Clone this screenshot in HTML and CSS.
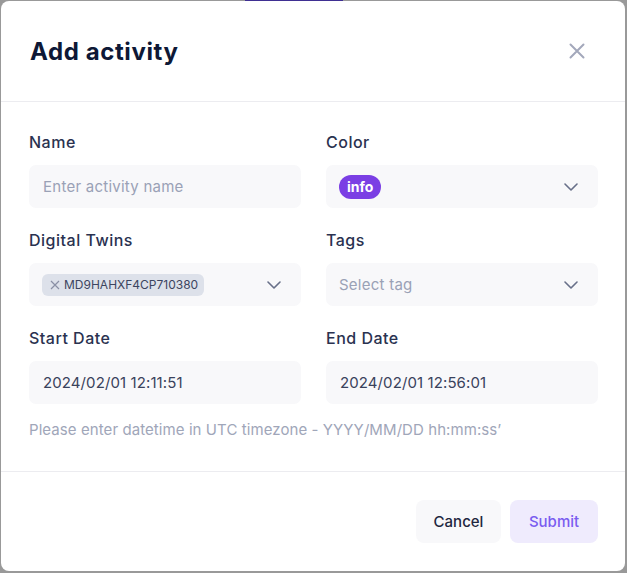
FILE: index.html
```html
<!DOCTYPE html>
<html lang="en">
<head>
<meta charset="utf-8">
<title>Add activity</title>
<link rel="stylesheet" href="styles.css">
</head>
<body>
<div class="backdrop-strip"><span class="strip-accent"></span></div>
<div class="dialog">
  <header class="dialog-header">
    <h1 class="dialog-title">Add activity</h1>
    <button class="close-btn" aria-label="Close">
      <svg width="16" height="16" viewBox="0 0 16 16"><path d="M1.5 1.5 L14.5 14.5 M14.5 1.5 L1.5 14.5" stroke="#a3a8bb" stroke-width="2" stroke-linecap="round" fill="none"/></svg>
    </button>
  </header>
  <div class="dialog-body">
    <div class="form-grid">
      <div class="field">
        <label class="field-label">Name</label>
        <div class="input"><span class="placeholder">Enter activity name</span></div>
      </div>
      <div class="field">
        <label class="field-label">Color</label>
        <div class="input select">
          <span class="badge">info</span>
          <svg class="chevron" width="14" height="8" viewBox="0 0 14 8"><path d="M1 1 L7 7 L13 1" stroke="#687089" stroke-width="1.6" fill="none" stroke-linecap="round" stroke-linejoin="round"/></svg>
        </div>
      </div>
      <div class="field">
        <label class="field-label">Digital Twins</label>
        <div class="input select">
          <span class="chip">
            <svg width="10" height="10" viewBox="0 0 10 10"><path d="M1 1 L9 9 M9 1 L1 9" stroke="#8a90a5" stroke-width="1.2" fill="none"/></svg>
            <span class="chip-text">MD9HAHXF4CP710380</span>
          </span>
          <svg class="chevron" width="14" height="8" viewBox="0 0 14 8"><path d="M1 1 L7 7 L13 1" stroke="#687089" stroke-width="1.6" fill="none" stroke-linecap="round" stroke-linejoin="round"/></svg>
        </div>
      </div>
      <div class="field">
        <label class="field-label">Tags</label>
        <div class="input select">
          <span class="placeholder">Select tag</span>
          <svg class="chevron" width="14" height="8" viewBox="0 0 14 8"><path d="M1 1 L7 7 L13 1" stroke="#687089" stroke-width="1.6" fill="none" stroke-linecap="round" stroke-linejoin="round"/></svg>
        </div>
      </div>
      <div class="field">
        <label class="field-label">Start Date</label>
        <div class="input"><span class="value">2024/02/01 12:11:51</span></div>
      </div>
      <div class="field">
        <label class="field-label">End Date</label>
        <div class="input"><span class="value">2024/02/01 12:56:01</span></div>
      </div>
    </div>
    <p class="help">Please enter datetime in UTC timezone - YYYY/MM/DD hh:mm:ss’</p>
  </div>
  <footer class="dialog-footer">
    <button class="btn btn-cancel">Cancel</button>
    <button class="btn btn-submit">Submit</button>
  </footer>
</div>
</body>
</html>
```
FILE: styles.css
```css
* { box-sizing: border-box; }
html, body { margin: 0; padding: 0; }
body {
  background: #999999;
  width: 627px;
  height: 573px;
  overflow: hidden;
  font-family: "Inter", "Liberation Sans", sans-serif;
  display: flex;
  flex-direction: column;
  padding: 0 2px 2px 1px;
}
.backdrop-strip { height: 1px; flex: none; display: flex; }
.strip-accent { width: 98px; height: 1px; margin-left: 244px; background: #3f2f92; }
.dialog {
  flex: 1;
  background: #ffffff;
  border-radius: 8px;
  display: flex;
  flex-direction: column;
}
.dialog-header {
  height: 101px;
  border-bottom: 1px solid #ececf0;
  display: flex;
  align-items: center;
  justify-content: space-between;
  padding: 0 40px 0 29px;
}
.dialog-title {
  margin: 0;
  font-size: 24px;
  font-weight: 700;
  color: #0e1836;
  letter-spacing: 0.6px;
}
.close-btn {
  background: none;
  border: 0;
  padding: 0;
  width: 16px;
  height: 16px;
  display: flex;
}
.dialog-body {
  padding: 27px 27px 31px 28px;
  border-bottom: 1px solid #ececf0;
}
.form-grid {
  display: grid;
  grid-template-columns: 272px 272px;
  column-gap: 25px;
  row-gap: 19px;
}
.field { display: flex; flex-direction: column; }
.field-label {
  font-size: 16px;
  line-height: 26px;
  font-weight: 500;
  color: #2a3250;
  letter-spacing: 0.5px;
  margin-bottom: 10px;
}
.input {
  height: 43px;
  background: #f8f8fa;
  border-radius: 7px;
  display: flex;
  align-items: center;
  padding: 0 14px;
  font-size: 15px;
}
.select { justify-content: space-between; padding-right: 20px; padding-left: 13px; }
.placeholder { color: #9aa1b6; letter-spacing: 0.25px; }
.value {
  color: #3a425c;
  letter-spacing: 0.1px;
}
.badge {
  background: #7b3fe4;
  color: #ffffff;
  font-weight: 700;
  font-size: 14px;
  height: 24px;
  line-height: 24px;
  padding: 0 8px;
  border-radius: 12px;
}
.chip {
  background: #dde1ea;
  border-radius: 6px;
  height: 22px;
  display: flex;
  align-items: center;
  gap: 4px;
  padding: 0 6px 0 8px;
}
.chip-text { font-size: 12px; color: #3c4560; }
.help {
  margin: 16px 0 0;
  font-size: 15px;
  line-height: 20px;
  letter-spacing: 0.08px;
  color: #a0a6b9;
}
.dialog-footer {
  flex: 1;
  display: flex;
  justify-content: flex-end;
  align-items: flex-start;
  gap: 9px;
  padding: 28px 27px 0 0;
}
.btn {
  height: 43px;
  border: 0;
  border-radius: 8px;
  font-family: inherit;
  font-size: 15px;
  font-weight: 500;
  padding: 0 17px;
}
.btn-cancel { background: #f8f8fa; color: #1f2740; width: 85px; }
.btn-submit { background: #efebfd; color: #7a5cf0; width: 88px; }
```
